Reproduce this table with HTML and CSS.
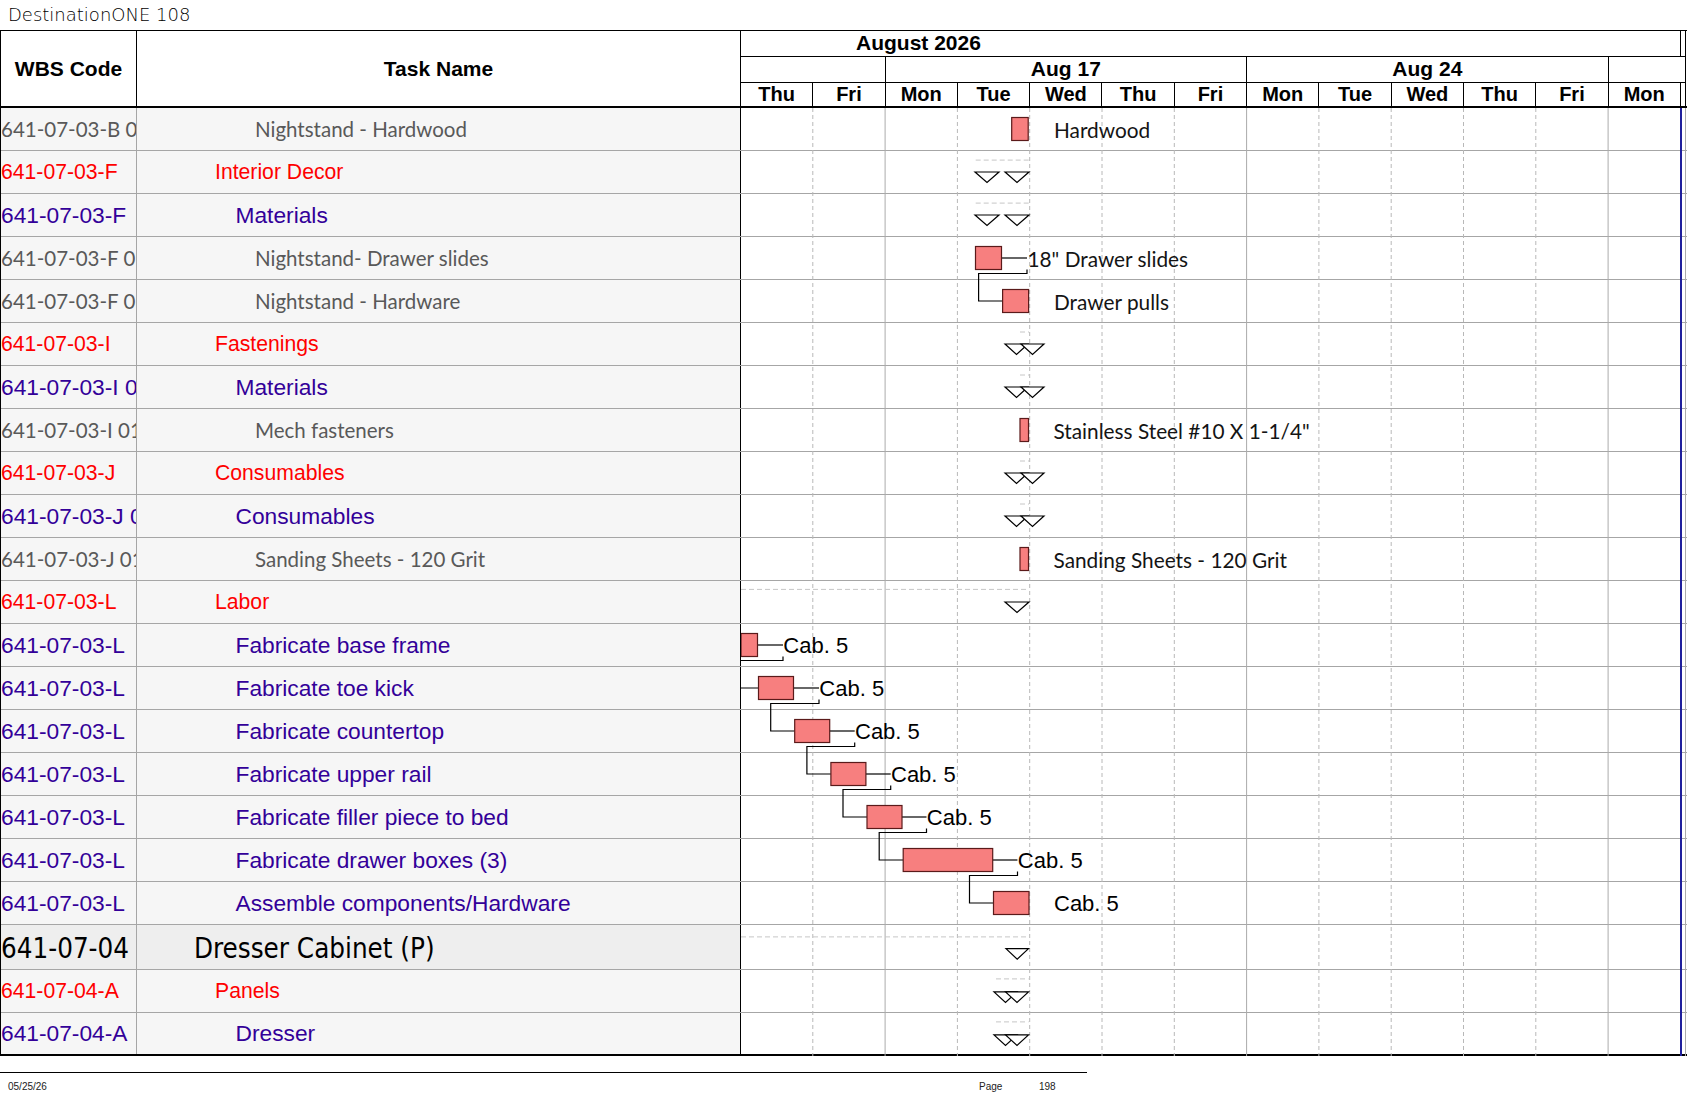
FILE: index.html
```html
<!DOCTYPE html>
<html>
<head>
<meta charset="utf-8">
<title>DestinationONE 108</title>
<link rel="stylesheet" href="styles.css">
</head>
<body>
<div class="title">DestinationONE 108</div>
<div class="table">
  <div class="head">
    <div class="h-wbs">WBS Code</div>
    <div class="h-task">Task Name</div>
    <div class="h-chart">
      <div class="month"><div class="month-cell">August 2026</div></div>
      <div class="weeks">
        <div class="wk w2"></div>
        <div class="wk w5">Aug 17</div>
        <div class="wk w5">Aug 24</div>
        <div class="wk wlast"></div>
      </div>
      <div class="days">
        <div class="day">Thu</div><div class="day">Fri</div>
        <div class="day">Mon</div><div class="day">Tue</div><div class="day">Wed</div><div class="day">Thu</div><div class="day">Fri</div>
        <div class="day">Mon</div><div class="day">Tue</div><div class="day">Wed</div><div class="day">Thu</div><div class="day">Fri</div>
        <div class="day">Mon</div>
      </div>
    </div>
  </div>
  <div class="body">
    <div class="row g"><div class="wbs">641-07-03-B 0</div><div class="task">Nightstand - Hardwood</div><div class="cal"></div></div>
    <div class="row r"><div class="wbs">641-07-03-F</div><div class="task">Interior Decor</div><div class="cal"></div></div>
    <div class="row p"><div class="wbs">641-07-03-F</div><div class="task">Materials</div><div class="cal"></div></div>
    <div class="row g"><div class="wbs">641-07-03-F 0</div><div class="task">Nightstand- Drawer slides</div><div class="cal"></div></div>
    <div class="row g"><div class="wbs">641-07-03-F 0</div><div class="task">Nightstand - Hardware</div><div class="cal"></div></div>
    <div class="row r"><div class="wbs">641-07-03-I</div><div class="task">Fastenings</div><div class="cal"></div></div>
    <div class="row p"><div class="wbs">641-07-03-I 0</div><div class="task">Materials</div><div class="cal"></div></div>
    <div class="row g"><div class="wbs">641-07-03-I 01</div><div class="task">Mech fasteners</div><div class="cal"></div></div>
    <div class="row r"><div class="wbs">641-07-03-J</div><div class="task">Consumables</div><div class="cal"></div></div>
    <div class="row p"><div class="wbs">641-07-03-J 0</div><div class="task">Consumables</div><div class="cal"></div></div>
    <div class="row g"><div class="wbs">641-07-03-J 01</div><div class="task">Sanding Sheets - 120 Grit</div><div class="cal"></div></div>
    <div class="row r"><div class="wbs">641-07-03-L</div><div class="task">Labor</div><div class="cal"></div></div>
    <div class="row p"><div class="wbs">641-07-03-L</div><div class="task">Fabricate base frame</div><div class="cal"></div></div>
    <div class="row p"><div class="wbs">641-07-03-L</div><div class="task">Fabricate toe kick</div><div class="cal"></div></div>
    <div class="row p"><div class="wbs">641-07-03-L</div><div class="task">Fabricate countertop</div><div class="cal"></div></div>
    <div class="row p"><div class="wbs">641-07-03-L</div><div class="task">Fabricate upper rail</div><div class="cal"></div></div>
    <div class="row p"><div class="wbs">641-07-03-L</div><div class="task">Fabricate filler piece to bed</div><div class="cal"></div></div>
    <div class="row p"><div class="wbs">641-07-03-L</div><div class="task">Fabricate drawer boxes (3)</div><div class="cal"></div></div>
    <div class="row p"><div class="wbs">641-07-03-L</div><div class="task">Assemble components/Hardware</div><div class="cal"></div></div>
    <div class="row big"><div class="wbs">641-07-04</div><div class="task">Dresser Cabinet (P)</div><div class="cal"></div></div>
    <div class="row r"><div class="wbs">641-07-04-A</div><div class="task">Panels</div><div class="cal"></div></div>
    <div class="row p"><div class="wbs">641-07-04-A</div><div class="task">Dresser</div><div class="cal"></div></div>

    <svg class="chart" width="945" height="948" viewBox="0 0 945 948">
      <!-- day grid -->
      <line class="gd" x1="71.8" y1="0" x2="71.8" y2="948"/>
      <line class="gw" x1="144.1" y1="0" x2="144.1" y2="948"/>
      <line class="gd" x1="216.4" y1="0" x2="216.4" y2="948"/>
      <line class="gd" x1="288.7" y1="0" x2="288.7" y2="948"/>
      <line class="gd" x1="361" y1="0" x2="361" y2="948"/>
      <line class="gd" x1="433.3" y1="0" x2="433.3" y2="948"/>
      <line class="gw" x1="505.6" y1="0" x2="505.6" y2="948"/>
      <line class="gd" x1="577.9" y1="0" x2="577.9" y2="948"/>
      <line class="gd" x1="650.2" y1="0" x2="650.2" y2="948"/>
      <line class="gd" x1="722.5" y1="0" x2="722.5" y2="948"/>
      <line class="gd" x1="794.8" y1="0" x2="794.8" y2="948"/>
      <line class="gw" x1="867.1" y1="0" x2="867.1" y2="948"/>
      <rect class="today" x="939" y="0" width="2" height="948"/>
      <line class="gw" x1="944.5" y1="0" x2="944.5" y2="948"/>

      <!-- summary dashes -->
      <line class="dash" x1="234.7" y1="52.1" x2="288" y2="52.1"/>
      <line class="dash" x1="234.7" y1="95.1" x2="288" y2="95.1"/>
      <line class="dash" x1="279" y1="224" x2="288" y2="224"/>
      <line class="dash" x1="279" y1="267" x2="288" y2="267"/>
      <line class="dash" x1="279" y1="353" x2="288" y2="353"/>
      <line class="dash" x1="279" y1="396" x2="288" y2="396"/>
      <line class="dash" x1="0" y1="481.4" x2="288" y2="481.4"/>
      <line class="dash" x1="0" y1="828.9" x2="287.5" y2="828.9"/>
      <line class="dash" x1="255" y1="870.9" x2="287.5" y2="870.9"/>
      <line class="dash" x1="255" y1="913.9" x2="287.5" y2="913.9"/>

      <!-- summary triangles -->
      <polygon class="tri" points="234,64 258,64 246,74.5"/>
      <polygon class="tri" points="264,64 288,64 276,74.5"/>
      <polygon class="tri" points="234,107 258,107 246,117.5"/>
      <polygon class="tri" points="264,107 288,107 276,117.5"/>
      <polygon class="tri" points="264,236 287,236 275.5,246.5"/>
      <polygon class="tri" points="280,236 303,236 291.5,246.5"/>
      <polygon class="tri" points="264,279 287,279 275.5,289.5"/>
      <polygon class="tri" points="280,279 303,279 291.5,289.5"/>
      <polygon class="tri" points="264,365 287,365 275.5,375.5"/>
      <polygon class="tri" points="280,365 303,365 291.5,375.5"/>
      <polygon class="tri" points="264,408 287,408 275.5,418.5"/>
      <polygon class="tri" points="280,408 303,408 291.5,418.5"/>
      <polygon class="tri" points="264,494 288,494 276,504.5"/>
      <polygon class="tri" points="265,840.6 287.5,840.6 276.2,851.1"/>
      <polygon class="tri" points="253,883.9 276,883.9 264.5,894.4"/>
      <polygon class="tri" points="264.5,883.9 287.5,883.9 276,894.4"/>
      <polygon class="tri" points="253,926.9 276,926.9 264.5,937.4"/>
      <polygon class="tri" points="264.5,926.9 287.5,926.9 276,937.4"/>

      <!-- links -->
      <polyline class="ln" points="286,161.5 286,165.5 237.6,165.5 237.6,193 261.6,193"/>
      <polyline class="ln" points="42,548.5 42,552.5 -6.4,552.5 -6.4,580 17.5,580"/>
      <polyline class="ln" points="78,591.5 78,595.5 29.7,595.5 29.7,623 53.7,623"/>
      <polyline class="ln" points="113.7,634.5 113.7,638.5 65.9,638.5 65.9,666 89.9,666"/>
      <polyline class="ln" points="149.7,677.5 149.7,681.5 102,681.5 102,709 126,709"/>
      <polyline class="ln" points="185.5,720.5 185.5,724.5 138.2,724.5 138.2,752 162.2,752"/>
      <polyline class="ln" points="276.5,763.5 276.5,767.5 228.5,767.5 228.5,795 252.5,795"/>

      <!-- connectors bar -> label -->
      <line class="ln" x1="260.5" y1="150" x2="286" y2="150"/>
      <line class="ln" x1="16.5" y1="537" x2="42" y2="537"/>
      <line class="ln" x1="52.5" y1="580" x2="78" y2="580"/>
      <line class="ln" x1="88.7" y1="623" x2="113.7" y2="623"/>
      <line class="ln" x1="124.9" y1="666" x2="149.7" y2="666"/>
      <line class="ln" x1="161" y1="709" x2="185.5" y2="709"/>
      <line class="ln" x1="251.7" y1="752" x2="276.5" y2="752"/>

      <!-- task bars -->
      <rect class="bar" x="270.7" y="9.5" width="16.5" height="23"/>
      <rect class="bar" x="234.5" y="138.5" width="26" height="23"/>
      <rect class="bar" x="261.6" y="181.5" width="26" height="23"/>
      <rect class="bar" x="279" y="310.5" width="8.5" height="23"/>
      <rect class="bar" x="279" y="439.5" width="8.5" height="23"/>
      <rect class="bar" x="0" y="525.5" width="16.5" height="23"/>
      <rect class="bar" x="17.5" y="568.5" width="35" height="23"/>
      <rect class="bar" x="53.7" y="611.5" width="35" height="23"/>
      <rect class="bar" x="89.9" y="654.5" width="35" height="23"/>
      <rect class="bar" x="126" y="697.5" width="35" height="23"/>
      <rect class="bar" x="162.2" y="740.5" width="89.5" height="23"/>
      <rect class="bar" x="252.5" y="783.5" width="35.5" height="23"/>

      <!-- labels -->
      <text class="lbl" x="313" y="21">Hardwood</text>
      <text class="lbl" x="286.5" y="150">18" Drawer slides</text>
      <text class="lbl" x="313" y="193">Drawer pulls</text>
      <text class="lbl" x="312.5" y="322">Stainless Steel #10 X 1-1/4"</text>
      <text class="lbl" x="312.5" y="451">Sanding Sheets - 120 Grit</text>
      <text class="cab" x="42.3" y="537">Cab. 5</text>
      <text class="cab" x="78.3" y="580">Cab. 5</text>
      <text class="cab" x="114" y="623">Cab. 5</text>
      <text class="cab" x="150" y="666">Cab. 5</text>
      <text class="cab" x="185.8" y="709">Cab. 5</text>
      <text class="cab" x="276.8" y="752">Cab. 5</text>
      <text class="cab" x="313" y="795">Cab. 5</text>
    </svg>
  </div>
</div>
<div class="foot">
  <div class="f-date">05/25/26</div>
  <div class="f-page">Page</div>
  <div class="f-num">198</div>
</div>
</body>
</html>
```
FILE: styles.css
```css
html, body {
  margin: 0;
  padding: 0;
  background: #ffffff;
}
body {
  width: 1687px;
  height: 1097px;
  overflow: hidden;
  font-family: "Liberation Sans", Arial, sans-serif;
  color: #000;
}
.title {
  height: 30px;
  line-height: 30px;
  padding-left: 8px;
  font-family: "DejaVu Sans", sans-serif;
  font-weight: 200;
  font-size: 18px;
  color: #000;
}
.table {
  width: 1686px;
  border-left: 1px solid #000;
}
.head {
  display: grid;
  grid-template-columns: 136px 604px 945px;
  border-top: 1px solid #000;
  border-bottom: 2px solid #000;
  font-family: "Liberation Sans", Arial, sans-serif;
  font-weight: bold;
}
.h-wbs, .h-task {
  display: flex;
  align-items: center;
  justify-content: center;
  font-size: 21px;
  border-right: 1px solid #000;
}
.h-chart {
  display: grid;
  grid-template-rows: 26px 26px 23px;
  border-right: 1px solid #000;
  box-sizing: border-box;
}
.month {
  display: flex;
  border-bottom: 1px solid #000;
}
.month-cell {
  width: 939.9px;
  box-sizing: border-box;
  border-right: 1px solid #000;
  padding-left: 115px;
  font-size: 21px;
  line-height: 24px;
}
.weeks {
  display: flex;
  border-bottom: 1px solid #000;
}
.wk {
  box-sizing: border-box;
  border-right: 1px solid #000;
  text-align: center;
  font-size: 21px;
  line-height: 24px;
}
.w2 { width: 144.6px; }
.w5 { width: 361.5px; }
.wlast { flex: 1; border-right: none; }
.days {
  display: flex;
}
.day {
  width: 72.3px;
  flex: none;
  box-sizing: border-box;
  border-right: 1px solid #000;
  text-align: center;
  font-size: 20px;
  line-height: 23px;
}
.body {
  position: relative;
}
.row {
  display: grid;
  grid-template-columns: 136px 604px 945px;
  height: 43px;
  box-sizing: border-box;
  border-bottom: 1px solid #a6a6a6;
}
.row:last-of-type {
  border-bottom: 2px solid #000;
}
.wbs, .task {
  display: flex;
  align-items: center;
  white-space: nowrap;
  overflow: hidden;
  background: #f6f6f6;
}
.wbs {
  border-right: 1px solid #a6a6a6;
}
.task {
  border-right: 1px solid #000;
}
.cal {
  background: #fff;
}
.g .wbs, .g .task {
  font-family: Lato, "Open Sans", sans-serif;
  font-size: 20.5px;
  color: #595959;
}
.g .task { padding-left: 118px; }
.r .wbs, .r .task {
  font-size: 21.2px;
  color: #ff0000;
}
.r .task { padding-left: 78px; }
.p .wbs, .p .task {
  font-size: 22.75px;
  color: #330099;
}
.p .task { padding-left: 98.5px; }
.big { height: 45px; }
.big .wbs, .big .task {
  font-family: "DejaVu Sans Condensed", "DejaVu Sans", sans-serif;
  font-size: 27.5px;
  color: #000;
  background: #eeeeee;
  padding-top: 2px;
  box-sizing: border-box;
}
.big .task { padding-left: 57px; }

.chart {
  position: absolute;
  left: 740px;
  top: 0;
  overflow: hidden;
}
.gd {
  stroke: #b8b8b8;
  stroke-width: 1;
  stroke-dasharray: 4 3;
}
.gw {
  stroke: #ababab;
  stroke-width: 1;
}
.today {
  fill: #1f1f9c;
}
.dash {
  stroke: #c6c6c6;
  stroke-width: 1;
  stroke-dasharray: 5 3;
}
.tri {
  fill: #ffffff;
  stroke: #000;
  stroke-width: 1.2;
}
.ln {
  fill: none;
  stroke: #000;
  stroke-width: 1.2;
}
.bar {
  fill: #f77f7f;
  stroke: #5a1a1a;
  stroke-width: 1.2;
}
.lbl {
  font-family: Lato, "Open Sans", sans-serif;
  font-size: 20.8px;
  fill: #141414;
  dominant-baseline: central;
}
.cab {
  font-family: "Liberation Sans", Arial, sans-serif;
  font-size: 22px;
  fill: #000;
  dominant-baseline: central;
}
.foot {
  width: 1087px;
  margin-top: 16px;
  border-top: 1.5px solid #000;
  display: flex;
  padding-top: 8px;
  font-family: "Liberation Sans", Arial, sans-serif;
  font-size: 10px;
  color: #222;
}
.f-date {
  width: 971px;
  padding-left: 8px;
}
.f-page {
  width: 60px;
}
```
